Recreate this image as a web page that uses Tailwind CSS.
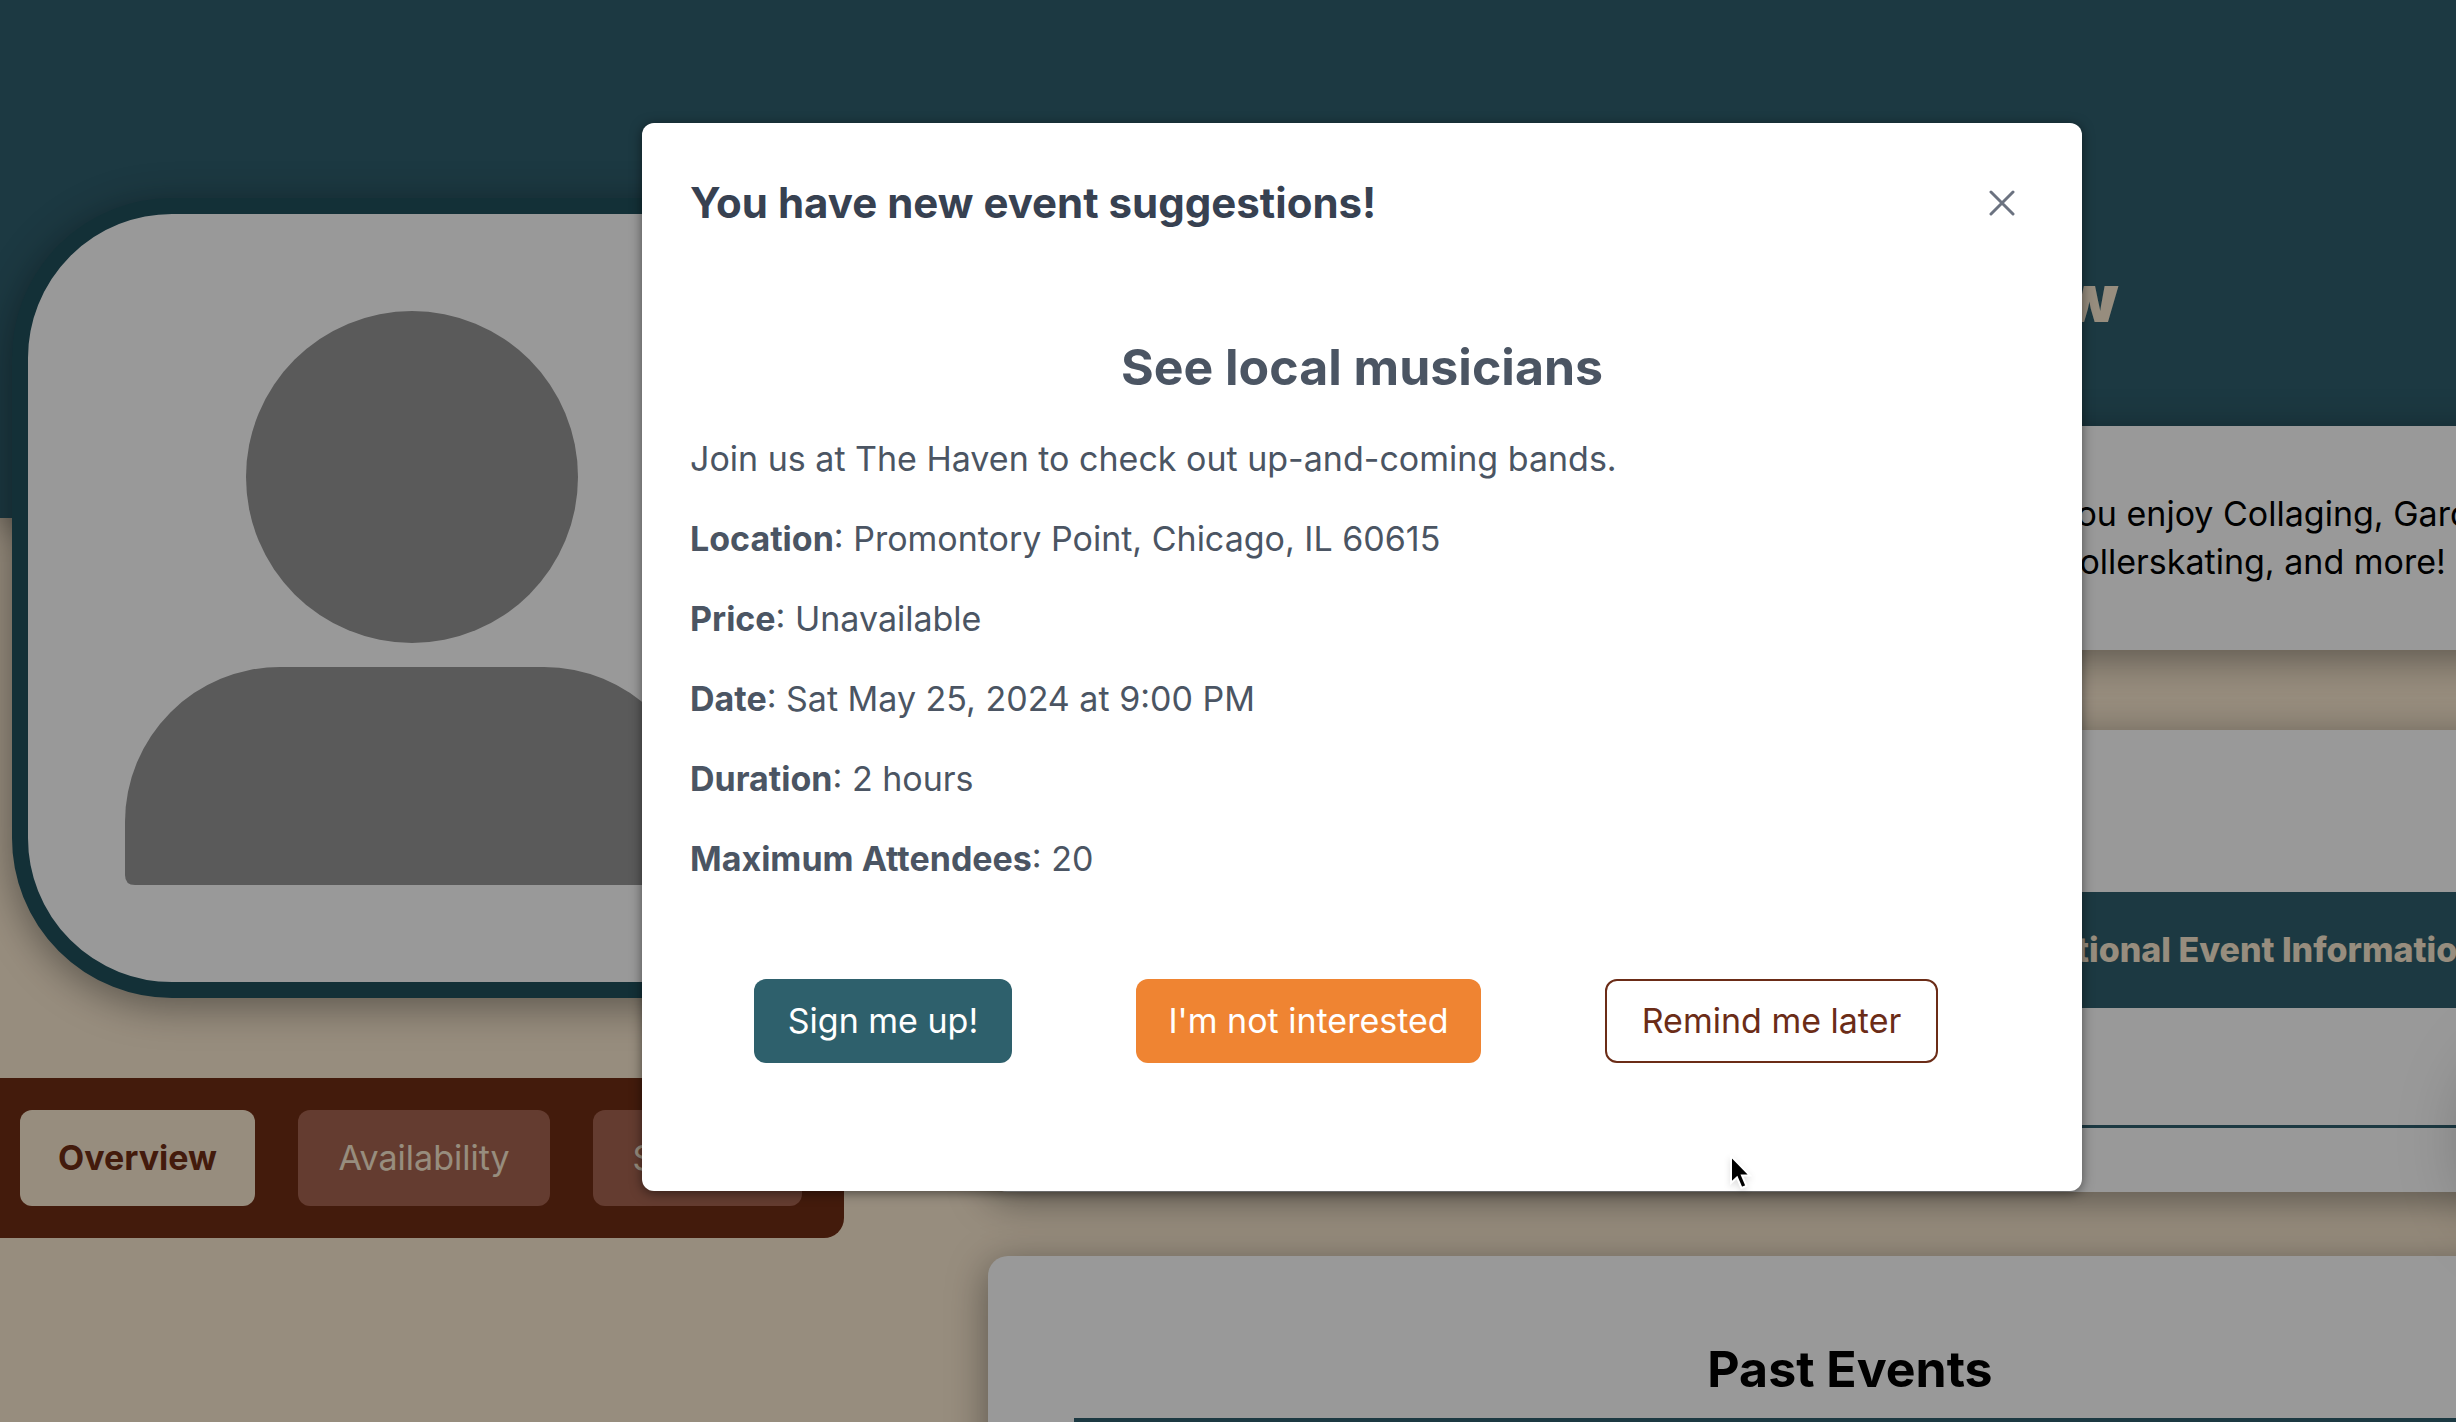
<!DOCTYPE html>
<html lang="en">
<head>
<meta charset="utf-8">
<title>Event suggestions</title>
<script src="https://cdn.jsdelivr.net/npm/@tailwindcss/browser@4"></script>
</head>
<body class="bg-[#fcebd2]">
<div class="h-screen overflow-hidden font-['Inter',sans-serif] text-[34px] leading-[48px] text-black">
  <div class="relative -mr-[268px] min-h-full">
    <header class="h-[518px] bg-[#2f5f6e] shadow-[0_8px_32px_rgba(0,0,0,0.4)]"></header>

    <div class="relative -mt-80 flex items-start justify-between pr-3">
      <!-- Profile column -->
      <aside class="flex flex-col items-start gap-20">
        <div class="ml-3 size-[800px] overflow-hidden rounded-[160px] border-16 border-[#20505d] bg-white shadow-[0_8px_40px_rgba(0,0,0,0.4)]">
          <svg viewBox="0 0 768 768" class="size-full" role="img" aria-label="Profile picture">
            <circle cx="384" cy="263" r="166" fill="#969696"/>
            <path d="M97 661V608A155 155 0 0 1 252 453H516A155 155 0 0 1 671 608V661Q671 671 661 671H107Q97 671 97 661Z" fill="#969696"/>
          </svg>
        </div>
        <nav class="flex gap-[43px] rounded-r-[20px] bg-[#702d14] py-8 pr-[42px] pl-5 text-[#fcebd2]">
          <button type="button" class="h-24 w-[235px] rounded-xl bg-[#fcebd2] font-bold text-[#702d14]">Overview</button>
          <button type="button" class="h-24 w-[252px] rounded-xl bg-[#a76450]">Availability</button>
          <button type="button" class="h-24 w-[209px] rounded-xl bg-[#a76450]">Settings</button>
        </nav>
      </aside>

      <!-- Dashboard column -->
      <main class="w-[1724px]">
        <h1 class="mb-[88px] pt-15 pl-5 text-center text-[66px] leading-20 font-black text-[#fcebd2]">Welcome, Drew</h1>
        <section class="mb-20 h-56 rounded-[20px] bg-white pt-16 pl-[1070px] whitespace-nowrap shadow-[0_8px_40px_rgba(0,0,0,0.4)]">
          <p>you enjoy Collaging, Gardening,<br>Rollerskating, and more!</p>
        </section>
        <section class="mb-16 rounded-[20px] bg-white px-[86px] pt-[162px] pb-16 shadow-[0_8px_40px_rgba(0,0,0,0.4)]">
          <table class="w-full">
            <thead>
              <tr class="h-[116px] bg-[#2f5f6e] text-[#fcebd2]"><th class="pl-[924px] text-left font-extrabold whitespace-nowrap">Additional Event Information</th></tr>
            </thead>
            <tbody>
              <tr class="h-[118px] border-b-3 border-[#2f5f6e]"><td></td></tr>
            </tbody>
          </table>
        </section>
        <section class="rounded-[20px] bg-white px-[86px] pt-19 pb-16 shadow-[0_8px_40px_rgba(0,0,0,0.4)]">
          <h2 class="mb-3 text-center text-[50px] leading-[74px] font-bold">Past Events</h2>
          <div class="h-[116px] bg-[#2f5f6e]"></div>
        </section>
      </main>
    </div>

    <!-- Floating help button -->
    <button type="button" aria-label="Help" class="absolute top-[1050px] right-16 size-[180px] rounded-full bg-[#2f5f6e] shadow-[0_0_80px_rgba(0,0,0,0.4)]"></button>

    <!-- Dialog -->
    <div class="absolute inset-x-0 top-0 flex h-screen items-start justify-center bg-black/40 pt-[123px]">
      <div role="dialog" aria-labelledby="dialog-title" class="relative w-[1440px] rounded-xl bg-white px-12 pb-32 text-[#4b5563] shadow-[0_2px_12px_rgba(0,0,0,0.5)]">
        <div class="flex items-center justify-between pt-12 pr-[19px]">
          <h2 id="dialog-title" class="text-[42px] leading-16 font-bold text-[#374151]">You have new event suggestions!</h2>
          <button type="button" aria-label="Close">
            <svg viewBox="0 0 26 26" class="size-[26px] fill-none stroke-[#6b7280] stroke-3" stroke-linecap="round"><path d="M2 2 24 24M24 2 2 24"/></svg>
          </button>
        </div>
        <h3 class="mt-25 mb-9 text-center text-[50px] leading-16 font-bold">See local musicians</h3>
        <div class="flex flex-col gap-8">
          <p>Join us at The Haven to check out up-and-coming bands.</p>
          <p><b>Location</b>: Promontory Point, Chicago, IL 60615</p>
          <p><b>Price</b>: Unavailable</p>
          <p><b>Date</b>: Sat May 25, 2024 at 9:00 PM</p>
          <p><b>Duration</b>: 2 hours</p>
          <p><b>Maximum Attendees</b>: 20</p>
        </div>
        <div class="mt-24 flex gap-[124px] pl-16">
          <button type="button" class="h-[84px] w-[258px] rounded-xl bg-[#2e606c] text-white">Sign me up!</button>
          <button type="button" class="h-[84px] w-[345px] rounded-xl bg-[#ef8432] text-white">I'm not interested</button>
          <button type="button" class="h-[84px] w-[333px] rounded-xl border-2 border-[#6b2c17] text-[#6b2c17]">Remind me later</button>
        </div>
        <svg viewBox="0 0 24 36" class="absolute bottom-0 left-[1086px] h-9 w-6 drop-shadow-md" aria-hidden="true"><path d="M3 1V28L9 22.500L13.500 33L18.500 31L14 20.500H22Z" fill="#000" stroke="#fff" stroke-width="2"/></svg>
      </div>
    </div>
  </div>
</div>
</body>
</html>
